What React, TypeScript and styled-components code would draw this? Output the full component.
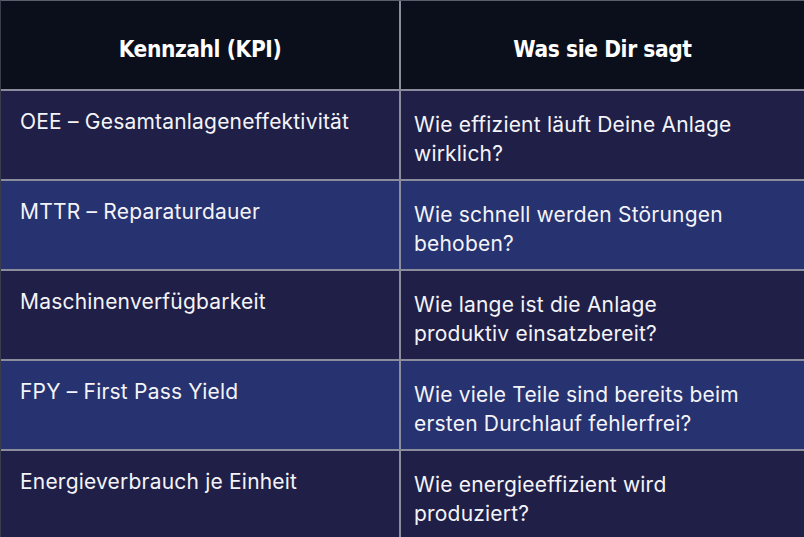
import styled, { createGlobalStyle } from "styled-components";

const GlobalStyle = createGlobalStyle`
    html, body {
        margin: 0;
        padding: 0;
        background: #201f47;
    }
    * {
        box-sizing: border-box;
    }
`;

const Table = styled.div`
    width: 804px;
    height: 537px;
    overflow: hidden;
    display: grid;
    grid-template-columns: 398px 1fr;
    grid-auto-rows: 88px;
    column-gap: 2px;
    row-gap: 2px;
    background: #8b8d9c;
    border-top: 1px solid #5b5e6c;
    border-left: 1px solid #3a3d4c;
`;

const HeaderCell = styled.div`
    background: #0b0f1c;
    color: #ffffff;
    font-family: "DejaVu Sans Condensed", "DejaVu Sans", sans-serif;
    font-stretch: condensed;
    font-weight: bold;
    font-size: 22.5px;
    letter-spacing: -0.4px;
    display: flex;
    align-items: center;
    justify-content: center;
    padding-top: 7px;
`;

const Cell = styled.div<{ $tone: "dark" | "blue"; $right?: boolean }>`
    background: ${(p) => (p.$tone === "blue" ? "#273270" : "#201f47")};
    color: #f4f4f8;
    font-family: Inter, "Noto Sans", sans-serif;
    font-size: 21px;
    letter-spacing: 0.2px;
    line-height: 29px;
    padding: ${(p) => (p.$right ? "19px 20px 0 13px" : "16px 20px 0 19px")};
`;

type Row = {
    kpi: string;
    question: string[];
};

const rows: Row[] = [
    { kpi: "OEE – Gesamtanlageneffektivität", question: ["Wie effizient läuft Deine Anlage", "wirklich?"] },
    { kpi: "MTTR – Reparaturdauer", question: ["Wie schnell werden Störungen", "behoben?"] },
    { kpi: "Maschinenverfügbarkeit", question: ["Wie lange ist die Anlage", "produktiv einsatzbereit?"] },
    { kpi: "FPY – First Pass Yield", question: ["Wie viele Teile sind bereits beim", "ersten Durchlauf fehlerfrei?"] },
    { kpi: "Energieverbrauch je Einheit", question: ["Wie energieeffizient wird", "produziert?"] },
];

function App() {
    return (
        <>
            <GlobalStyle />
            <Table>
                <HeaderCell>Kennzahl (KPI)</HeaderCell>
                <HeaderCell>Was sie Dir sagt</HeaderCell>
                {rows.map((row, i) => {
                    const tone = i % 2 === 1 ? "blue" : "dark";
                    return [
                        <Cell key={`${i}k`} $tone={tone}>{row.kpi}</Cell>,
                        <Cell key={`${i}q`} $tone={tone} $right>
                            {row.question.map((line) => (
                                <div key={line}>{line}</div>
                            ))}
                        </Cell>,
                    ];
                })}
            </Table>
        </>
    );
}

export default App;
